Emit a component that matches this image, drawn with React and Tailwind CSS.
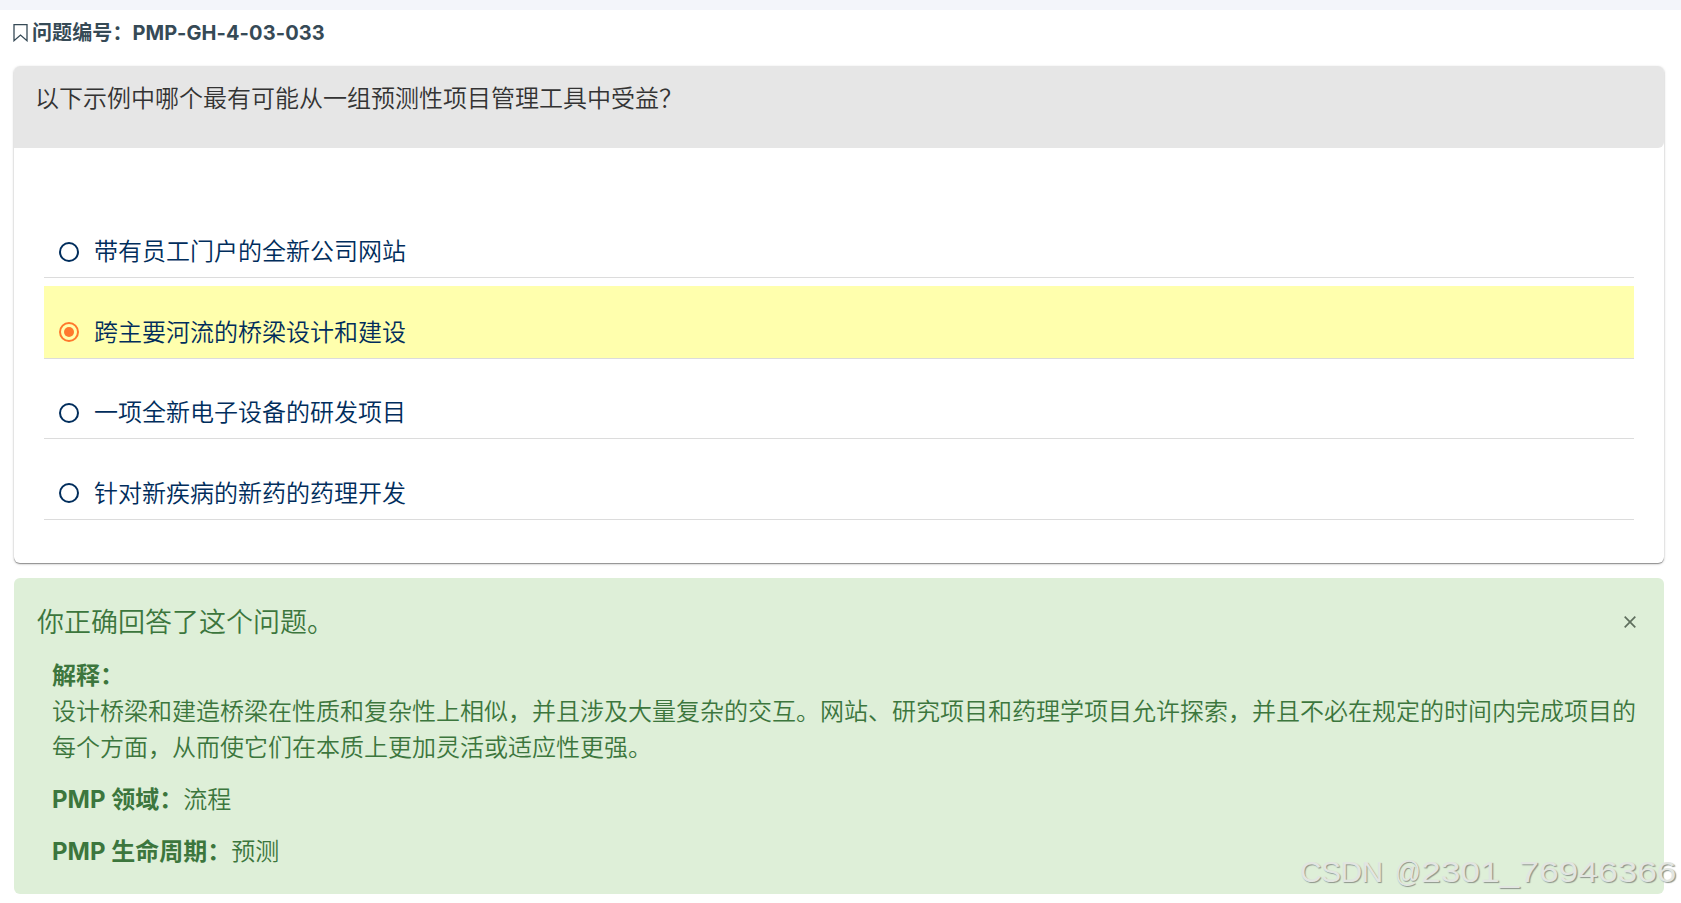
const options = [
  { id: 'a', label: '带有员工门户的全新公司网站' },
  { id: 'b', label: '跨主要河流的桥梁设计和建设' },
  { id: 'c', label: '一项全新电子设备的研发项目' },
  { id: 'd', label: '针对新疾病的新药的药理开发' },
];

const selected = 'b';

function Radio({ checked }) {
  return (
    <span
      className={[
        'flex size-5 shrink-0 items-center justify-center rounded-full border-2',
        checked ? 'border-[#ff782d]' : 'border-[#002d5c]',
      ].join(' ')}
    >
      {checked && <span className="size-2.5 rounded-full bg-[#ff782d]" />}
    </span>
  );
}

function Option({ label, checked }) {
  return (
    <label
      className={[
        'flex h-[73px] items-center gap-[15px] border-b border-[#dcdcdc] pt-[21px] pl-[15px]',
        checked ? 'bg-[#ffffad]' : '',
      ].join(' ')}
    >
      <Radio checked={checked} />
      <span className="pt-px text-2xl font-[350] text-[#002d5c]">{label}</span>
    </label>
  );
}

function QuestionCard() {
  return (
    <section className="h-[497px] rounded-md bg-white shadow-[0_1px_1px_rgba(0,0,0,0.35),0_1px_3px_rgba(0,0,0,0.2)]">
      <h2 className="h-[82px] rounded-t-md rounded-br-md bg-[#e6e6e6] px-[21px] pt-[15px] text-2xl leading-9 font-[350] text-[#333]">
        以下示例中哪个最有可能从一组预测性项目管理工具中受益？
      </h2>
      <div className="flex flex-col gap-[7.6px] px-[30px] pt-[57px]">
        {options.map((option) => (
          <Option key={option.id} label={option.label} checked={option.id === selected} />
        ))}
      </div>
    </section>
  );
}

function Feedback() {
  return (
    <section className="mt-[15px] h-[316px] rounded-md bg-[#deefd8] pt-6 pl-[23px] font-[350] text-[#3c763d]">
      <div className="flex items-start justify-between pr-7">
        <h3 className="pt-px text-[27px] leading-10">你正确回答了这个问题。</h3>
        <svg className="mt-3.5 size-3" viewBox="0 0 12 12" fill="none" stroke="#5f6f5e" strokeWidth="1.7">
          <path d="M.7.7l10.6 10.6M11.3.7L.7 11.3" />
        </svg>
      </div>
      <div className="pt-[15px] pr-[26px] pl-[15px] text-2xl leading-9">
        <p>
          <strong className="font-bold">解释：</strong>
        </p>
        <p>
          设计桥梁和建造桥梁在性质和复杂性上相似，并且涉及大量复杂的交互。网站、研究项目和药理学项目允许探索，并且不必在规定的时间内完成项目的每个方面，从而使它们在本质上更加灵活或适应性更强。
        </p>
        <p className="mt-4">
          <strong className="font-bold">PMP 领域：</strong>流程
        </p>
        <p className="mt-4">
          <strong className="font-bold">PMP 生命周期：</strong>预测
        </p>
      </div>
    </section>
  );
}

function Watermark() {
  return (
    <div className="absolute top-[854px] left-[1300px] flex font-['Liberation_Sans'] text-[30px] leading-9 whitespace-pre text-[#e2e5e1] [text-shadow:1px_1px_1px_#8c948b]">
      <span className="w-[95px] tracking-[-0.6px]">CSDN </span>
      <span className="w-[26px] origin-left scale-x-[0.85]">@</span>
      <span className="origin-left scale-x-[1.178]">2301_76946366</span>
    </div>
  );
}

export default function App() {
  return (
    <div
      lang="zh-CN"
      className="relative h-[903px] overflow-hidden bg-white font-[Inter,'Noto_Sans_CJK_SC',sans-serif]"
    >
      <div className="h-2.5 bg-[#f3f5fa]" />
      <main className="pr-[17px] pl-[14px]">
        <h1 className="-ml-px flex h-14 items-start gap-1 pt-2 text-xl leading-[30px] font-bold tracking-[0.1px] text-[#364a56]">
          <svg className="mt-[6px] h-[18px] w-[15px]" viewBox="0 0 15 18" fill="none" stroke="#364a56" strokeWidth="1.3">
            <path d="M1 .7h13v16L7.5 11 1 16.700z" />
          </svg>
          问题编号：PMP-GH-4-03-033
        </h1>
        <QuestionCard />
        <Feedback />
      </main>
      <Watermark />
    </div>
  );
}
